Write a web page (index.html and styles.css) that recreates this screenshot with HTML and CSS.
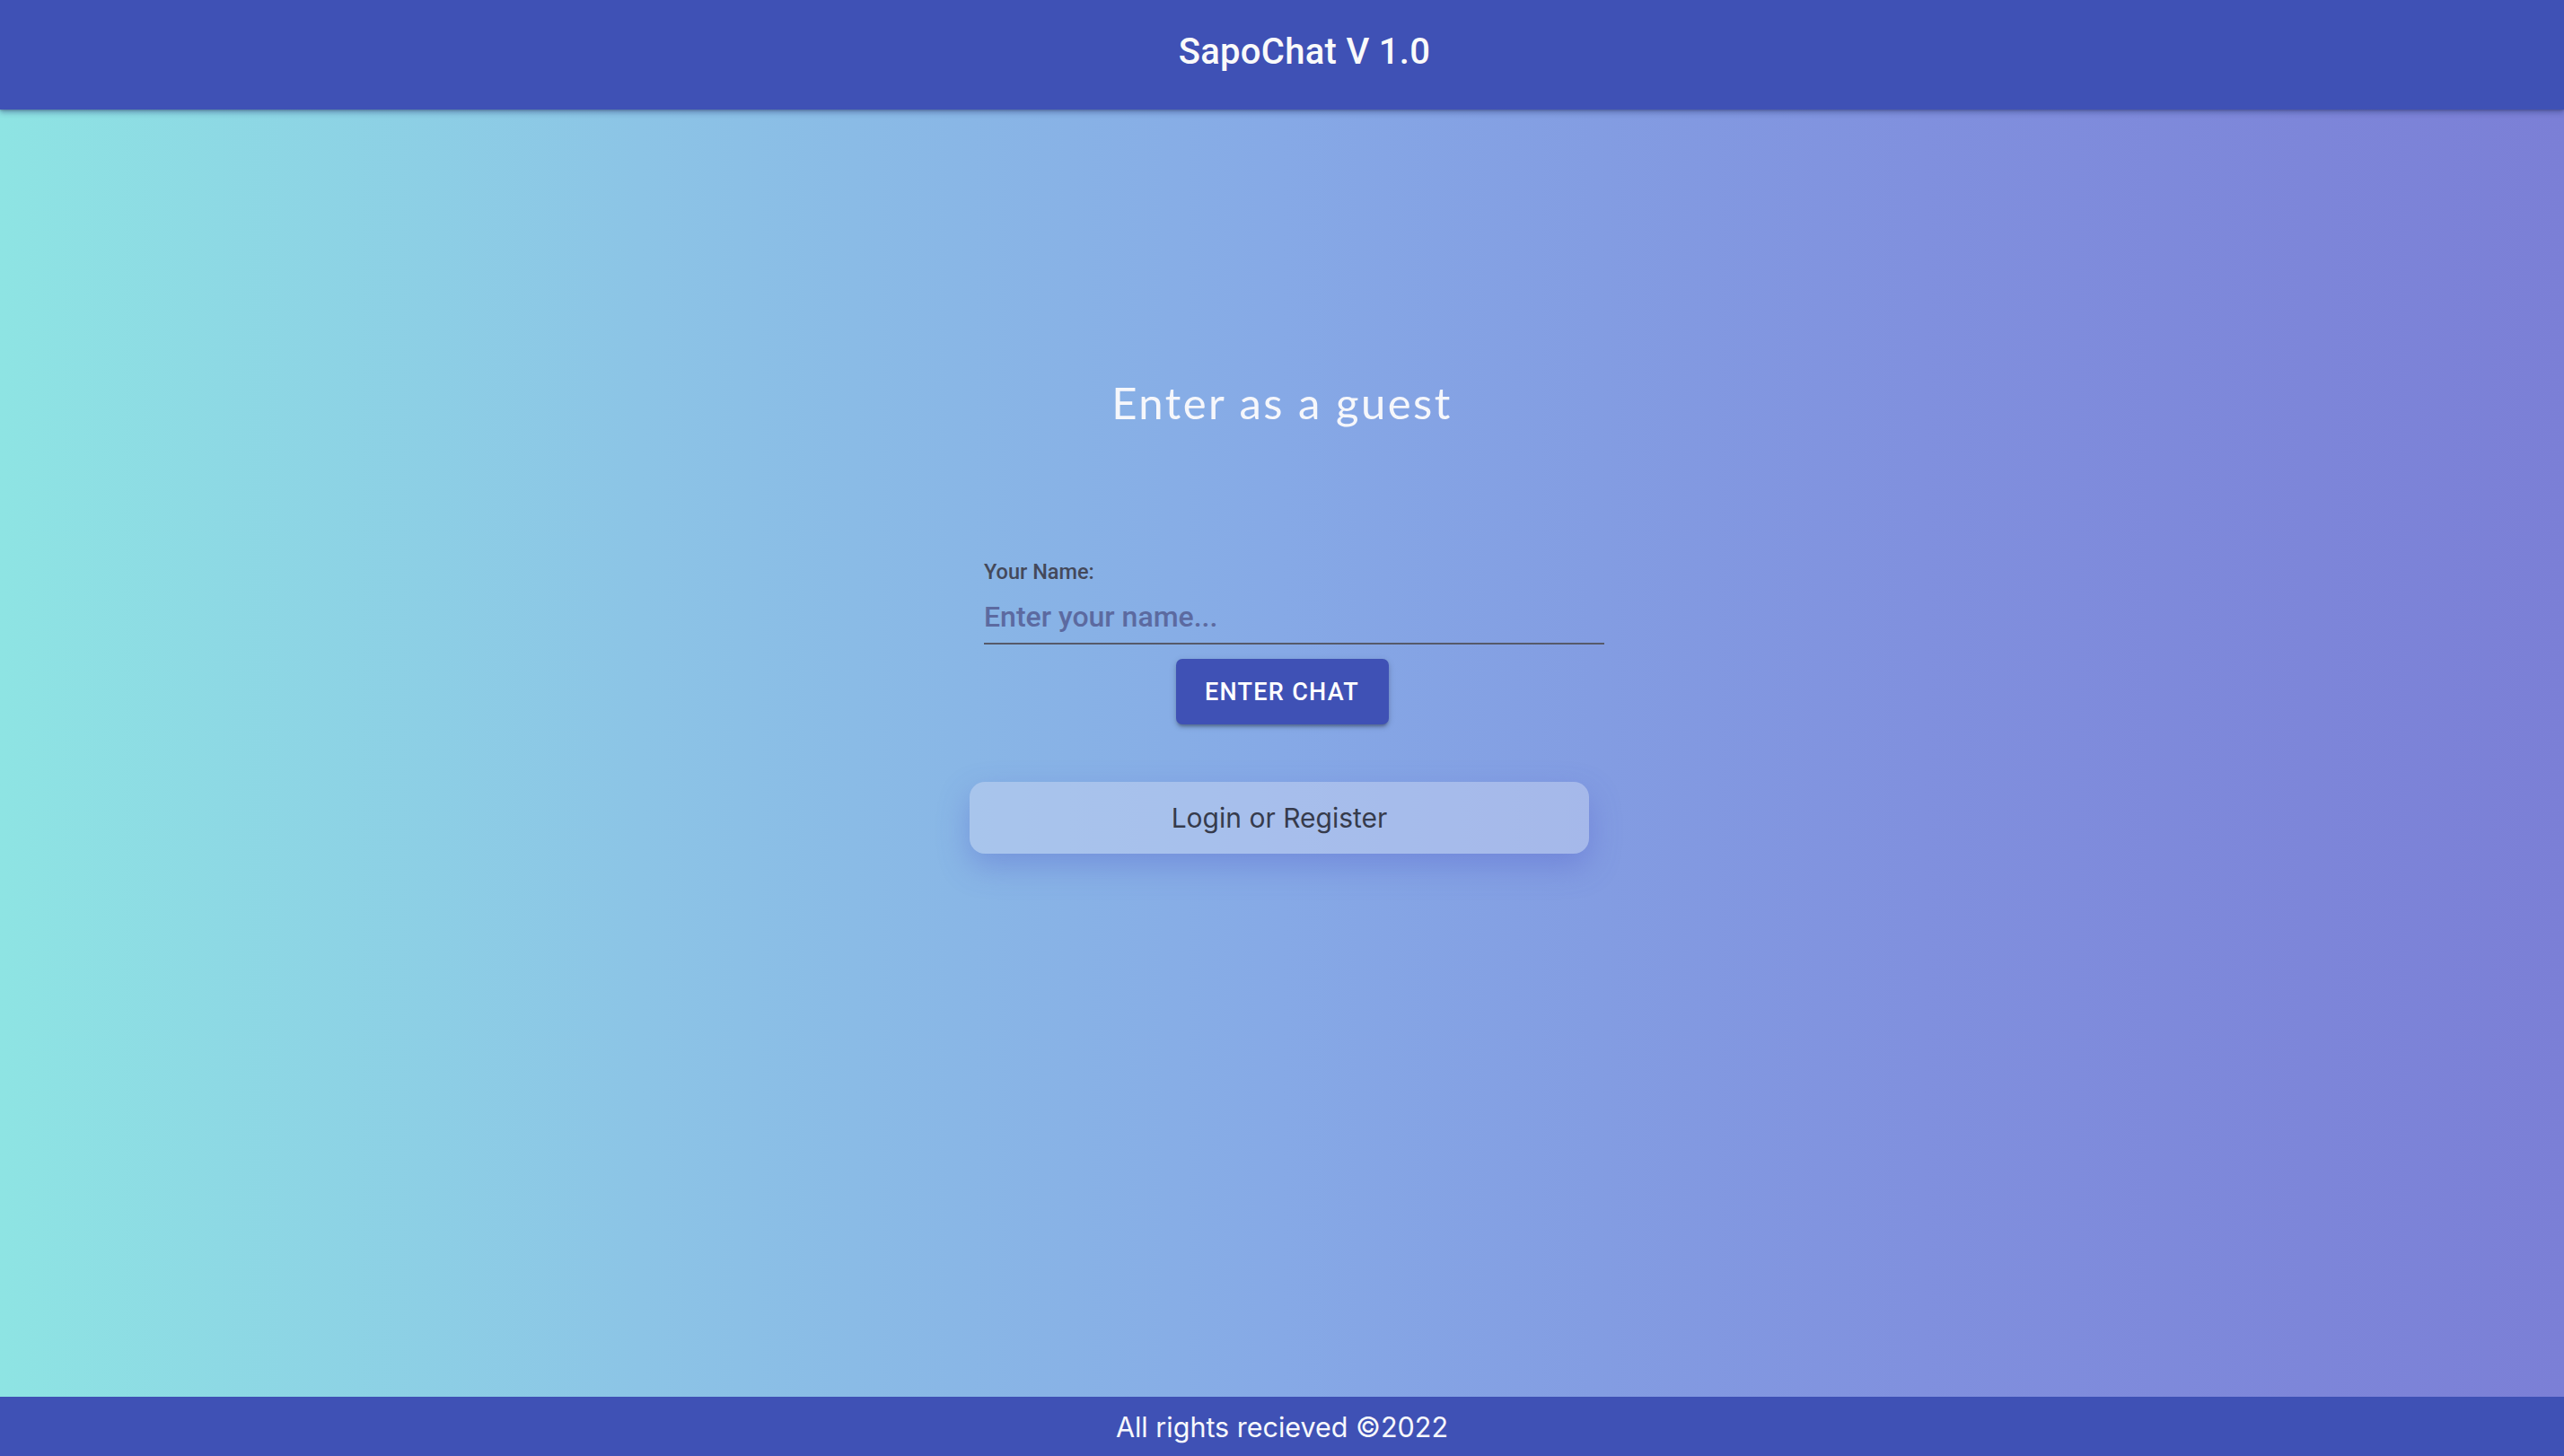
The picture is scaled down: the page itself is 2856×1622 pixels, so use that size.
FILE: index.html
```html
<!DOCTYPE html>
<html lang="en">
<head>
<meta charset="utf-8">
<title>SapoChat</title>
<link rel="stylesheet" href="styles.css">
</head>
<body>
<div class="app">
  <header class="toolbar">
    <span class="toolbar-title">SapoChat V 1.0</span>
  </header>
  <main class="content">
    <h1 class="guest-title">Enter as a guest</h1>
    <form class="guest-form">
      <label class="field">
        <span class="field-label">Your Name:</span>
        <input class="field-input" type="text" placeholder="Enter your name...">
      </label>
      <button type="button" class="enter-btn">ENTER CHAT</button>
    </form>
    <button type="button" class="login-btn">Login or Register</button>
  </main>
  <footer class="footer">All rights recieved ©2022</footer>
</div>
</body>
</html>
```

FILE: styles.css
```css
* { box-sizing: border-box; }
html, body { margin: 0; padding: 0; height: 100%; }
body { font-family: "Roboto", "Liberation Sans", sans-serif; }

.app {
  display: flex;
  flex-direction: column;
  height: 100vh;
  background: linear-gradient(90deg, #8ee4e3 0%, #8cc4e6 25%, #86a9e6 50%, #8090de 75%, #7b7fd6 100%);
}

.toolbar {
  flex: 0 0 122px;
  display: flex;
  align-items: center;
  justify-content: center;
  padding: 0 0 8px 50px;
  background: #3f51b5;
  color: #fafafa;
  box-shadow: 0 3px 6px rgba(40, 50, 110, 0.45), 0 1px 2px rgba(0,0,0,0.2);
  position: relative;
  z-index: 2;
}
.toolbar-title {
  font-family: "Roboto", sans-serif;
  font-weight: 500;
  font-size: 40px;
  letter-spacing: 0.3px;
}

.content {
  flex: 1 1 auto;
  display: flex;
  flex-direction: column;
  align-items: center;
}

.guest-title {
  margin: 302px 0 0 0;
  font-family: "Lato", sans-serif;
  font-weight: 400;
  font-size: 49px;
  line-height: 48px;
  letter-spacing: 2.5px;
  color: #f6f7fb;
}

.guest-form {
  margin-top: 154px;
  display: flex;
  flex-direction: column;
  align-items: center;
}

.field {
  display: flex;
  flex-direction: column;
  width: 691px;
  margin-left: 27px;
}
.field-label {
  font-family: "Roboto", sans-serif;
  font-weight: 500;
  font-size: 23.5px;
  line-height: 22px;
  color: #44495a;
}
.field-input {
  margin-top: 23px;
  padding: 0 0 14px 0;
  border: none;
  border-bottom: 2px solid #565a6a;
  background: transparent;
  font-family: "Roboto", sans-serif;
  font-weight: 500;
  font-size: 32px;
  line-height: 31px;
  height: 47px;
  color: #333;
  outline: none;
}
.field-input::placeholder {
  color: #5c6aa0;
  opacity: 1;
}

.enter-btn {
  margin-top: 16px;
  width: 237px;
  height: 73px;
  border: none;
  border-radius: 7px;
  background: #3f51b5;
  color: #ffffff;
  font-family: "Roboto", sans-serif;
  font-weight: 500;
  font-size: 27px;
  letter-spacing: 1.3px;
  box-shadow: 0 4px 3px -2px rgba(0,0,0,0.2), 0 3px 4px 0 rgba(0,0,0,0.14), 0 2px 9px 0 rgba(0,0,0,0.12);
}

.login-btn {
  margin: 64px 6px 0 0;
  width: 690px;
  height: 80px;
  border: none;
  border-radius: 17px;
  background: rgba(200, 212, 242, 0.5);
  color: #363b4c;
  font-family: "Inter", "Liberation Sans", sans-serif;
  font-size: 30px;
  box-shadow: 0 14px 34px rgba(80, 90, 200, 0.35);
}

.footer {
  flex: 0 0 66px;
  display: flex;
  align-items: center;
  justify-content: center;
  background: #3f51b5;
  color: #f7f8fc;
  font-family: "Inter", "Liberation Sans", sans-serif;
  font-size: 30.5px;
}
```
